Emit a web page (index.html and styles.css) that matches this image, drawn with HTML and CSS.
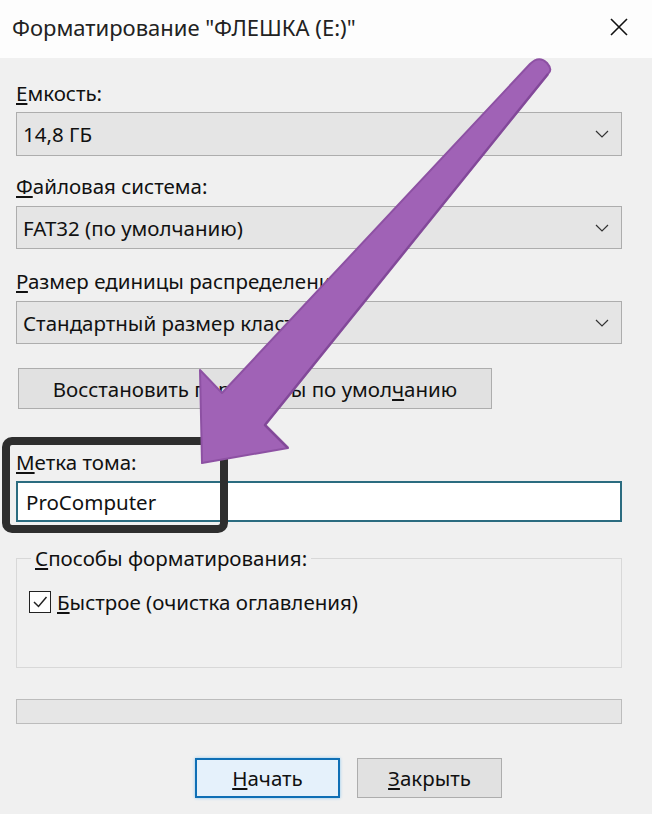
FILE: index.html
```html
<!DOCTYPE html>
<html lang="ru">
<head>
<meta charset="utf-8">
<title>Форматирование</title>
<link rel="stylesheet" href="styles.css">
</head>
<body>
<div class="window">
  <div class="titlebar">
    <span class="title">Форматирование "ФЛЕШКА (E:)"</span>
    <svg class="close" width="18" height="18" viewBox="0 0 18 18"><path d="M1 1 L17 17 M17 1 L1 17" stroke="#111" stroke-width="1.6" fill="none"/></svg>
  </div>
  <div class="content">
    <div class="label l1"><u>Е</u>мкость:</div>
    <div class="combo c1"><span>14,8 ГБ</span><svg class="chev" width="14" height="8" viewBox="0 0 14 8"><path d="M1 1 L7 7 L13 1" stroke="#333" stroke-width="1.2" fill="none"/></svg></div>
    <div class="label l2"><u>Ф</u>айловая система:</div>
    <div class="combo c2"><span>FAT32 (по умолчанию)</span><svg class="chev" width="14" height="8" viewBox="0 0 14 8"><path d="M1 1 L7 7 L13 1" stroke="#333" stroke-width="1.2" fill="none"/></svg></div>
    <div class="label l3"><u>Р</u>азмер единицы распределения:</div>
    <div class="combo c3"><span>Стандартный размер кластера</span><svg class="chev" width="14" height="8" viewBox="0 0 14 8"><path d="M1 1 L7 7 L13 1" stroke="#333" stroke-width="1.2" fill="none"/></svg></div>
    <div class="btn restore">Восстановить параметры по умол<u>ч</u>анию</div>
    <div class="label l4"><u>М</u>етка тома:</div>
    <div class="input">ProComputer</div>
    <fieldset class="group">
      <legend><u>С</u>пособы форматирования:</legend>
      <div class="check">
        <span class="box"><svg width="18" height="18" viewBox="0 0 18 18"><path d="M3 9 L7.5 13.5 L15.5 4" stroke="#222" stroke-width="1.5" fill="none"/></svg></span>
        <span><u>Б</u>ыстрое (очистка оглавления)</span>
      </div>
    </fieldset>
    <div class="progress"></div>
    <div class="buttons">
      <div class="btn primary"><u>Н</u>ачать</div>
      <div class="btn"><u>З</u>акрыть</div>
    </div>
  </div>
  <div class="highlight"></div>
  <svg class="arrow" width="652" height="814" viewBox="0 0 652 814">
    <path d="M200 370 L222 393 L530 64 Q539 55 547 63 Q553 70 548 74 L265 425 L288 448 L202 463 Z" fill="#a062b6" stroke="#8d51a3" stroke-width="2" stroke-linejoin="round"/>
    <path d="M548 74 L265 425 L288 448" fill="none" stroke="#7e4494" stroke-width="2.5" stroke-linejoin="round" opacity="0.7"/>
  </svg>
</div>
</body>
</html>
```

FILE: styles.css
```css
* { box-sizing: border-box; }
html, body { margin: 0; padding: 0; }
body {
  width: 652px;
  height: 814px;
  overflow: hidden;
  background: #f0f0f0;
  font-family: "Noto Sans", "Open Sans", sans-serif;
  color: #111;
}
.window {
  position: relative;
  width: 652px;
  height: 814px;
}
.titlebar {
  height: 58px;
  background: #fdfdfd;
  display: flex;
  align-items: center;
  justify-content: space-between;
  padding: 0 24px 4px 12px;
}
.title {
  font-size: 22px;
  color: #222;
}
.content {
  padding: 0 30px 0 16px;
  font-size: 20.5px;
}
.label {
  line-height: 24px;
  height: 24px;
}
.l1 { margin-top: 23px; }
.l2 { margin-top: 18px; }
.l3 { margin-top: 20px; }
.l4 { margin-top: 41px; }
.combo {
  margin-top: 7px;
  height: 44px;
  background: #e5e5e5;
  border: 1px solid #adadad;
  display: flex;
  align-items: center;
  justify-content: space-between;
  padding: 0 12px 0 6px;
}
.c2, .c3 { margin-top: 8px; height: 43px; }
.chev { display: block; }
.btn {
  height: 41px;
  background: #e1e1e1;
  border: 1px solid #adadad;
  display: flex;
  align-items: center;
  justify-content: center;
}
.restore {
  margin-top: 24px;
  margin-left: 2px;
  width: 474px;
}
.input {
  margin-top: 7px;
  height: 41px;
  background: #fff;
  border: 2px solid #2b6c80;
  display: flex;
  align-items: center;
  padding-left: 8px;
}
.group {
  margin: 24px 0 0 0;
  padding: 8px 12px 0 12px;
  height: 122px;
  border: 1px solid #d8d8d8;
}
.group legend {
  padding: 0 4px;
  margin-left: 2px;
  line-height: 24px;
}
.check {
  display: flex;
  align-items: center;
  gap: 6px;
  margin-top: 10px;
}
.box {
  width: 22px;
  height: 22px;
  border: 1.5px solid #222;
  background: #fff;
  display: flex;
  align-items: center;
  justify-content: center;
}
.box svg { display: block; }
.progress {
  margin-top: 31px;
  height: 25px;
  background: #e6e6e6;
  border: 1px solid #bcbcbc;
}
.buttons {
  display: flex;
  gap: 17px;
  margin-top: 34px;
  padding-left: 179px;
}
.buttons .btn {
  width: 145px;
  height: 40px;
}
.primary {
  border: 2px solid #0f6fb5;
  background: #e5f1fb;
  box-shadow: 0 0 3px #8cc7f0;
}
.highlight {
  position: absolute;
  left: 2px;
  top: 437px;
  width: 226px;
  height: 96px;
  border: 8px solid #2e2e2e;
  border-radius: 10px;
}
.arrow {
  position: absolute;
  left: 0;
  top: 0;
}
u { text-decoration-thickness: 1.5px; text-underline-offset: 2px; }
```
